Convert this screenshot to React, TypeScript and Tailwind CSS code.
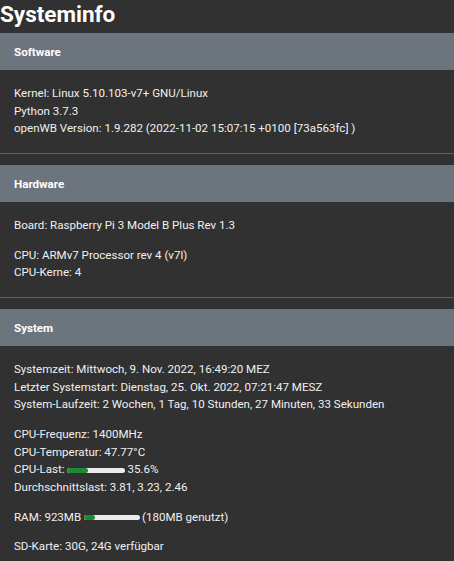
type Line = { label: string; bar?: { pct: number; width: number; after: string } };

type CardData = {
  title: string;
  groups: Line[][];
};

const cards: CardData[] = [
  {
    title: "Software",
    groups: [
      [
        { label: "Kernel: Linux 5.10.103-v7+ GNU/Linux" },
        { label: "Python 3.7.3" },
        { label: "openWB Version: 1.9.282 (2022-11-02 15:07:15 +0100 [73a563fc] )" },
      ],
    ],
  },
  {
    title: "Hardware",
    groups: [
      [{ label: "Board: Raspberry Pi 3 Model B Plus Rev 1.3" }],
      [{ label: "CPU: ARMv7 Processor rev 4 (v7l)" }, { label: "CPU-Kerne: 4" }],
    ],
  },
  {
    title: "System",
    groups: [
      [
        { label: "Systemzeit: Mittwoch, 9. Nov. 2022, 16:49:20 MEZ" },
        { label: "Letzter Systemstart: Dienstag, 25. Okt. 2022, 07:21:47 MESZ" },
        { label: "System-Laufzeit: 2 Wochen, 1 Tag, 10 Stunden, 27 Minuten, 33 Sekunden" },
      ],
      [
        { label: "CPU-Frequenz: 1400MHz" },
        { label: "CPU-Temperatur: 47.77°C" },
        { label: "CPU-Last:", bar: { pct: 35.6, width: 58, after: "35.6%" } },
        { label: "Durchschnittslast: 3.81, 3.23, 2.46" },
      ],
      [{ label: "RAM: 923MB", bar: { pct: 19.5, width: 56, after: "(180MB genutzt)" } }],
      [{ label: "SD-Karte: 30G, 24G verfügbar" }],
    ],
  },
];

function Bar({ pct, width }: { pct: number; width: number }) {
  return (
    <span
      className="mr-[2px] inline-block h-[5px] overflow-hidden rounded-full bg-[#e9ecef] align-middle"
      style={{ width }}
    >
      <span className="block h-full rounded-full bg-[#1f8a36]" style={{ width: `${pct}%` }} />
    </span>
  );
}

function Card({ card }: { card: CardData }) {
  return (
    <section className="mb-[11px] border-b border-[#5e5e5e] bg-[#313131]">
      <div className="bg-[#6c757d] px-[14px] py-[9.5px] text-[11.6px] font-bold leading-[18px] text-white">
        {card.title}
      </div>
      <div className="flex flex-col gap-[11.8px] px-[14px] py-[15px]">
        {card.groups.map((group, i) => (
          <div key={i}>
            {group.map((line) => (
              <p key={line.label} className="leading-[17.7px]">
                {line.label}
                {line.bar && (
                  <>
                    {" "}
                    <Bar pct={line.bar.pct} width={line.bar.width} />
                    {line.bar.after}
                  </>
                )}
              </p>
            ))}
          </div>
        ))}
      </div>
    </section>
  );
}

export default function App() {
  return (
    <div
      className="min-h-screen bg-[#313131] text-[11.55px] text-[#f0f0f0]"
      style={{ fontFamily: "Roboto, 'Noto Sans', sans-serif" }}
    >
      <h2 className="mb-[5px] text-[22.5px] font-bold leading-[28px] text-white">Systeminfo</h2>
      {cards.map((card) => (
        <Card key={card.title} card={card} />
      ))}
    </div>
  );
}
